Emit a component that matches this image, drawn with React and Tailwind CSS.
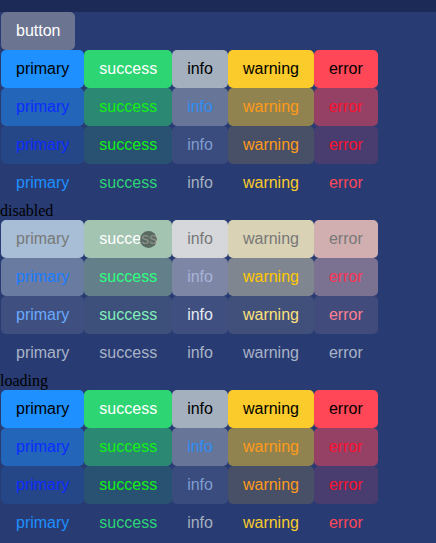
const KINDS = ["primary", "success", "info", "warning", "error"];

// one entry per row: [bg, text] for each kind
const normalRows = [
    [
        ["bg-[#1e90ff]", "text-black"],
        ["bg-[#2ed573]", "text-white"],
        ["bg-[#a4b0be]", "text-black"],
        ["bg-[#facb2b]", "text-black"],
        ["bg-[#ff4757]", "text-black"],
    ],
    [
        ["bg-[#1e90ff]/50", "text-[#0c2cff]"],
        ["bg-[#2ed573]/50", "text-[#14f014]"],
        ["bg-[#a4b0be]/50", "text-[#2e8ef5]"],
        ["bg-[#facb2b]/50", "text-[#ff9a1a]"],
        ["bg-[#ff4757]/50", "text-[#ff1030]"],
    ],
    [
        ["bg-[#1e90ff]/15", "text-[#0c2cff]"],
        ["bg-[#2ed573]/15", "text-[#14f014]"],
        ["bg-[#a4b0be]/15", "text-[#7f9dd2]"],
        ["bg-[#facb2b]/15", "text-[#ff9a1a]"],
        ["bg-[#ff4757]/15", "text-[#ff1030]"],
    ],
    [
        ["", "text-[#1e90ff]"],
        ["", "text-[#2ed573]"],
        ["", "text-[#a4b0be]"],
        ["", "text-[#facb2b]"],
        ["", "text-[#ff4757]"],
    ],
];

const disabledRows = [
    [
        ["bg-[#a7bed6]", "text-[#787878]"],
        ["bg-[#a3c4b1]", "text-white"],
        ["bg-[#d5d7db]", "text-[#787878]"],
        ["bg-[#d9d2b5]", "text-[#787878]"],
        ["bg-[#d1afb1]", "text-[#787878]"],
    ],
    [
        ["bg-[#6a7ba2]", "text-[#1a7cff]"],
        ["bg-[#637f8a]", "text-[#2cff80]"],
        ["bg-[#7e86a6]", "text-[#a8b4d8]"],
        ["bg-[#80868f]", "text-[#ffc800]"],
        ["bg-[#7b7190]", "text-[#ff3355]"],
    ],
    [
        ["bg-[#3e4f80]", "text-[#6aaaff]"],
        ["bg-[#3d4f7b]", "text-[#80f0b8]"],
        ["bg-[#3f5080]", "text-[#e6eaf0]"],
        ["bg-[#414f7b]", "text-[#ffe27a]"],
        ["bg-[#414c7c]", "text-[#ff8090]"],
    ],
    [
        ["", "text-[#a9b3c6]"],
        ["", "text-[#a9b3c6]"],
        ["", "text-[#a9b3c6]"],
        ["", "text-[#a9b3c6]"],
        ["", "text-[#a9b3c6]"],
    ],
];

const Btn = ({ bg, text, children, cursor }) => (
    <button
        className={`relative px-[15px] py-[10px] leading-[18px] text-base rounded-[5px] whitespace-nowrap ${bg} ${text}`}
    >
        {children}
        {cursor && (
            <span className="absolute left-[56px] top-[11px] w-[17px] h-[17px] rounded-full bg-black/45" />
        )}
    </button>
);

const Group = ({ rows, marked }) => (
    <div className="flex flex-col">
        {rows.map((row, r) => (
            <div key={r} className="flex pl-px">
                {row.map(([bg, text], i) => (
                    <Btn key={i} bg={bg} text={text} cursor={marked && r === 0 && i === 1}>
                        {KINDS[i]}
                    </Btn>
                ))}
            </div>
        ))}
    </div>
);

const Label = ({ children }) => (
    <div className="leading-[18px] text-base text-black font-['Liberation_Serif',serif]">{children}</div>
);

export default function App() {
    return (
        <div className="min-h-[543px] bg-[#283b73] font-['Liberation_Sans',Arial,sans-serif]">
            {/* top band */}
            <div className="h-[12px] bg-[#1c2a57]" />

            <div className="flex pl-px">
                <Btn bg="bg-[#6b7591]" text="text-white">button</Btn>
            </div>

            <Group rows={normalRows} />
            <Label>disabled</Label>
            <Group rows={disabledRows} marked />
            <Label>loading</Label>
            <Group rows={normalRows} />
        </div>
    );
}
